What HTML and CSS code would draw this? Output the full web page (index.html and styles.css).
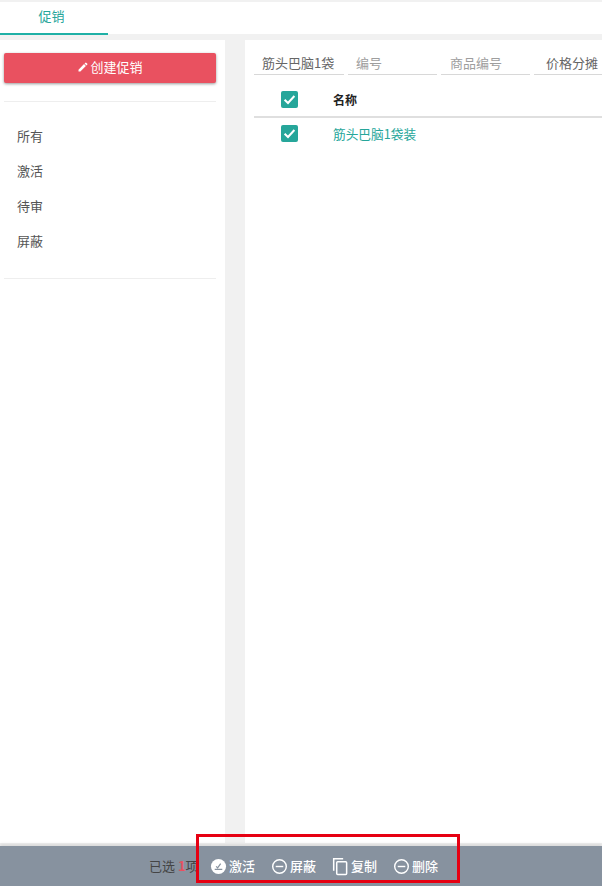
FILE: index.html
```html
<!DOCTYPE html>
<html lang="zh">
<head>
<meta charset="utf-8">
<title>促销</title>
<link rel="stylesheet" href="styles.css">
</head>
<body>
<div class="page">
  <nav class="tabs"><a class="tab">促销</a></nav>
  <div class="content">
    <aside class="side">
      <button class="create">
        <svg class="pen" viewBox="0 0 24 24"><path d="M3 17.25V21h3.75L17.8 9.94l-3.75-3.75L3 17.25zM20.7 7.04a1 1 0 0 0 0-1.41l-2.34-2.34a1 1 0 0 0-1.41 0l-1.83 1.83 3.75 3.75 1.83-1.83z"/></svg><span class="create-t">创建促销</span>
      </button>
      <ul class="menu">
        <li>所有</li>
        <li>激活</li>
        <li>待审</li>
        <li>屏蔽</li>
      </ul>
    </aside>
    <main class="main">
      <div class="filters">
        <div class="filter val">筋头巴脑1袋</div>
        <div class="filter">编号</div>
        <div class="filter">商品编号</div>
        <div class="filter val2">价格分摊</div>
      </div>
      <div class="row head">
        <span class="check"><svg viewBox="0 0 17 17"><path d="M3.6 8.8l3.4 3.2 6.4-7" /></svg></span>
        <span class="name-h">名称</span>
      </div>
      <div class="row item">
        <span class="check"><svg viewBox="0 0 17 17"><path d="M3.6 8.8l3.4 3.2 6.4-7" /></svg></span>
        <a class="name">筋头巴脑1袋装</a>
      </div>
    </main>
  </div>
  <footer class="bar">
    <span class="count">已选 <b>1</b>项</span>
    <span class="act"><svg class="ic" viewBox="0 0 18 18"><circle cx="9" cy="9" r="8" fill="#fff"/><path d="M5 12h8M6.5 8.8l1.6 1.6 3.2-4.4" fill="none" stroke="#87929f" stroke-width="1.3"/></svg>激活</span>
    <span class="act"><svg class="ic" viewBox="0 0 18 18"><circle cx="9" cy="9" r="7.2" fill="none" stroke="#fff" stroke-width="1.5"/><path d="M5 9h8" stroke="#fff" stroke-width="1.5"/></svg>屏蔽</span>
    <span class="act"><svg class="ic copy" viewBox="0 0 18 20"><path d="M1.8 14.5V1.8h10" fill="none" stroke="#fff" stroke-width="1.6"/><rect x="5" y="5" width="10.5" height="13.5" rx="1" fill="none" stroke="#fff" stroke-width="1.6"/></svg>复制</span>
    <span class="act"><svg class="ic" viewBox="0 0 18 18"><circle cx="9" cy="9" r="7.2" fill="none" stroke="#fff" stroke-width="1.5"/><path d="M5 9h8" stroke="#fff" stroke-width="1.5"/></svg>删除</span>
  </footer>
  <div class="mark"></div>
</div>
</body>
</html>
```
FILE: styles.css
```css
* { box-sizing: border-box; }
html, body { margin: 0; height: 100%; }
body { font-family: "Noto Sans CJK SC", "Liberation Sans", sans-serif; font-size: 13px; color: #555; background: #f1f1f1; overflow: hidden; }
.page { position: relative; width: 602px; height: 886px; display: flex; flex-direction: column; padding-top: 2px; }
.tabs { height: 32px; background: #fff; flex: none; }
.tab { display: block; width: 108px; height: 33px; padding: 4px 5px 0 0; line-height: 19px; font-size: 13px; text-align: center; color: #26a69a; border-bottom: 2px solid #1fb0a6; }
.content { flex: 1; display: flex; gap: 20px; margin-top: 6px; min-height: 0; }
.side { width: 225px; background: #fff; padding: 13px 9px 0 4px; }
.create { display: flex; align-items: center; justify-content: center; width: 212px; height: 30px; border: 0; border-radius: 2px; padding: 0; background: #e95160; color: #fff; font: inherit; font-size: 13px; box-shadow: 0 1px 3px rgba(0,0,0,.4); }
.create-t { position: relative; top: -2px; }
.pen { width: 12px; height: 12px; fill: #fff; margin: 0 1px 0 0; position: relative; top: -1px; }
.menu { list-style: none; margin: 18px 0 0; padding: 16px 0 18px 13px; border-top: 1px solid #eee; border-bottom: 1px solid #eee; height: 178px; }
.menu li { height: 35px; line-height: 35px; color: #555; }
.main { flex: 1; background: #fff; padding: 0 0 0 9px; overflow: hidden; min-width: 0; }
.filters { display: flex; gap: 4px; padding-top: 12px; width: 360px; }
.filter { flex: none; width: 89px; height: 23px; line-height: 21px; border-bottom: 1px solid #d8d8d8; padding-left: 8px; color: #9e9e9e; }
.filter.val { color: #666; width: 90px; white-space: nowrap; overflow: hidden; }
.filter:nth-child(3) { padding-left: 9px; }
.filter.val2 { color: #666; padding-left: 12px; width: 70px; margin-right: -10px; }
.row { display: flex; align-items: center; padding-left: 27px; }
.head { height: 36px; margin-top: 7px; border-bottom: 2px solid #dfdfdf; }
.item { height: 31px; }
.check { flex: none; width: 17px; height: 17px; border-radius: 2px; background: #26a69a; margin-right: 35px; display: block; }
.check svg { display: block; width: 17px; height: 17px; fill: none; stroke: #fff; stroke-width: 2; }
.name-h { font-weight: 700; color: #222; font-size: 12px; }
.name { color: #26a69a; font-size: 12.7px; }
.bar { flex: none; position: relative; height: 40px; margin-top: 3px; background: #87929f; display: flex; align-items: center; padding-left: 149px; color: #fff; font-size: 13px; font-weight: 500; box-shadow: 0 -2px 3px rgba(0,0,0,.1); }
.count { color: #444; font-weight: 400; width: 62px; white-space: nowrap; position: relative; top: -1px; }
.count b { color: #e95160; }
.act { display: flex; align-items: center; margin-right: 16px; white-space: nowrap; line-height: 17px; position: relative; top: -1px; left: -1px; }
.ic { width: 17px; height: 17px; margin-right: 2px; position: relative; top: 1px; }
.ic.copy { width: 17px; height: 19px; top: 1px; }
.mark { position: absolute; left: 196px; top: 834px; width: 264px; height: 49px; border: 3px solid #e60012; pointer-events: none; }
```
